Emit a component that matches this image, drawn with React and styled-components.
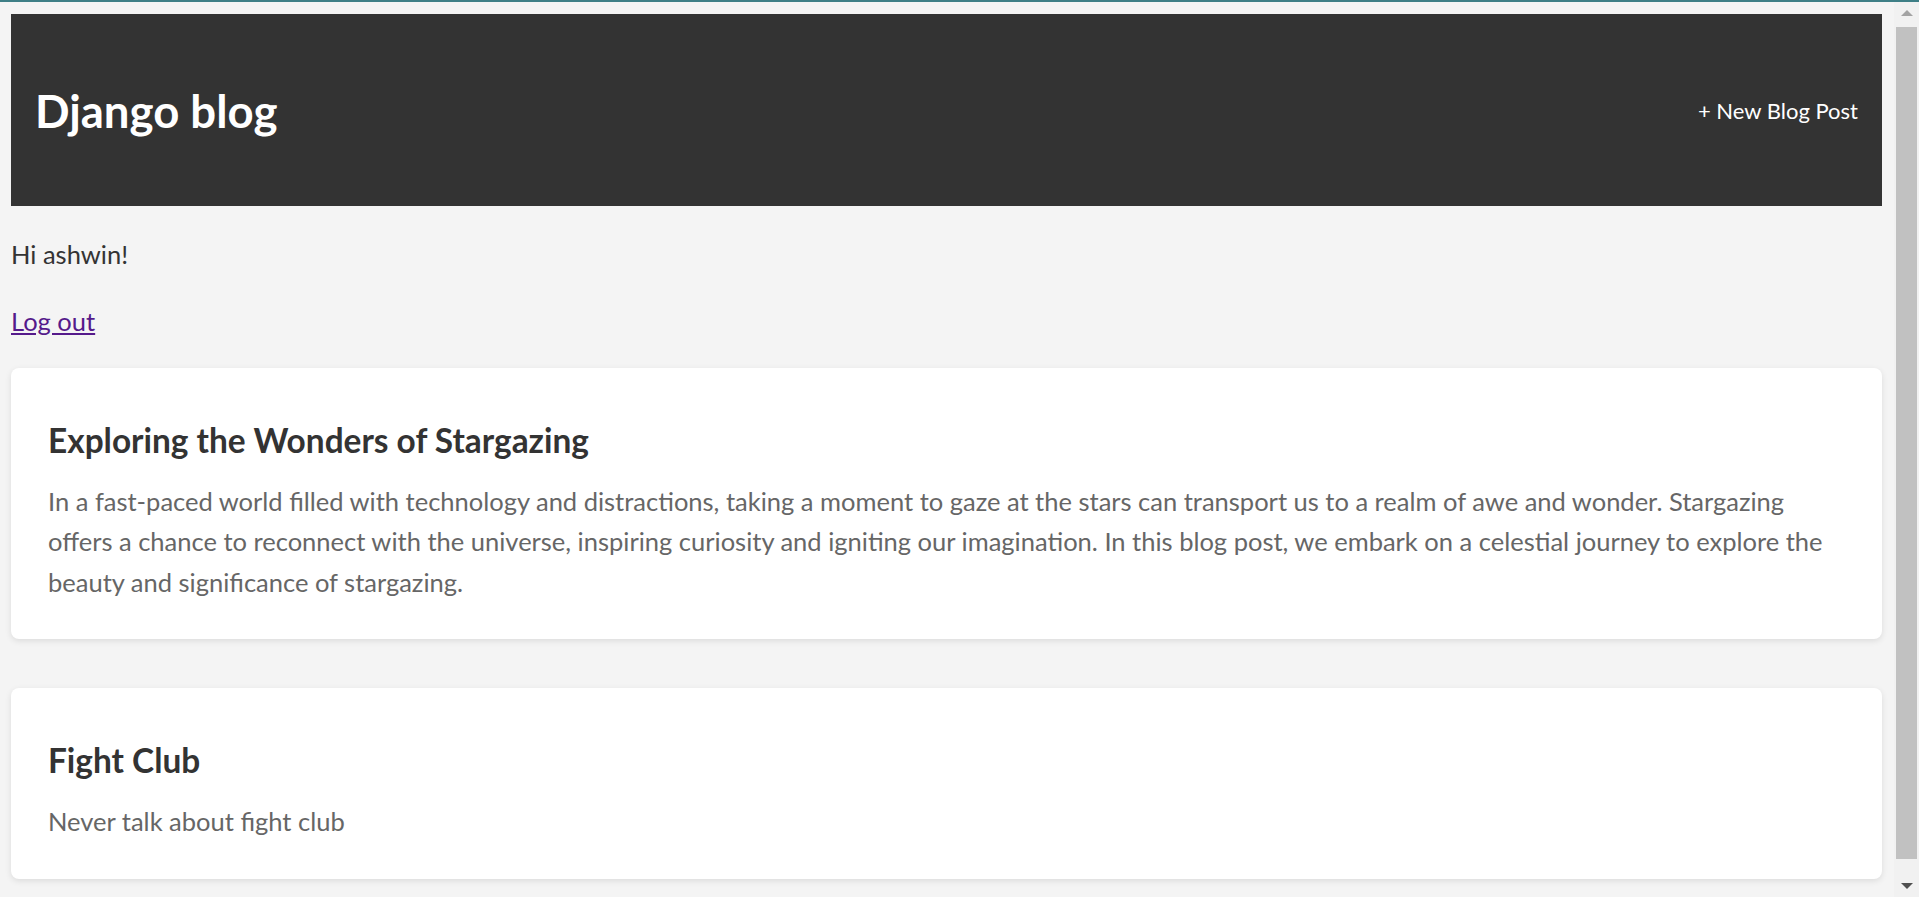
import styled, { createGlobalStyle } from 'styled-components';

const GlobalStyle = createGlobalStyle`
  html, body {
    margin: 0;
    padding: 0;
    height: 100%;
    overflow: hidden;
    background: #f4f4f4;
  }
  #root {
    height: 100%;
  }
`;

const Frame = styled.div`
  height: 100%;
  display: flex;
  flex-direction: column;
  font-family: Lato, "Liberation Sans", sans-serif;
`;
const TopStrip = styled.div`
  flex: 0 0 2px;
  background: #3e7f86;
`;
const Viewport = styled.div`
  flex: 1;
  display: flex;
  min-height: 0;
`;
const Page = styled.main`
  flex: 1;
  min-width: 0;
  overflow: hidden;
  padding: 12px 12px 0 11px;
`;
const Rail = styled.div`
  flex: 0 0 25px;
  display: flex;
  flex-direction: column;
  background: #f1f1f1;
`;
const RailButton = styled.div`
  flex: 0 0 22px;
  display: flex;
  align-items: center;
  justify-content: center;

  &::before {
    content: '';
    border-left: 6px solid transparent;
    border-right: 6px solid transparent;
    ${(p) =>
      p.$down
        ? 'border-top: 6px solid #505050;'
        : 'border-bottom: 6px solid #a3a3a3;'}
  }
`;
const Track = styled.div`
  flex: 1;
  padding: 3px 2px 16px 2px;
  display: flex;
`;
const Thumb = styled.div`
  flex: 1;
  background: #c1c1c1;
`;

const Header = styled.header`
  height: 192px;
  background: #333333;
  display: flex;
  align-items: center;
  justify-content: space-between;
  padding: 0 24px 0 24px;
  color: #fff;
`;
const Brand = styled.h1`
  margin: 0;
  font-size: 45.5px;
  font-weight: 700;
`;
const NewPost = styled.a`
  color: #fff;
  text-decoration: none;
  font-size: 22px;
`;
const Line = styled.p`
  margin: ${(p) => (p.$first ? '28px' : '27px')} 0 0;
  font-size: 25.5px;
  line-height: 40px;
  color: #333;
`;
const LogOut = styled.a`
  color: #551a8b;
  text-decoration: underline;
`;
const PostList = styled.div`
  margin-top: 27px;
  display: flex;
  flex-direction: column;
  gap: 49px;
`;
const Card = styled.article`
  background: #fff;
  border-radius: 8px;
  box-shadow: 0 2px 6px rgba(0, 0, 0, 0.1);
  padding: 49px 37px 37px;
`;
const CardTitle = styled.h2`
  margin: 0 0 17px;
  font-size: 33.4px;
  line-height: 47px;
  font-weight: 700;
  color: #333;
`;
const CardText = styled.p`
  margin: 0;
  max-width: 1782px;
  font-size: 25.5px;
  line-height: 40.4px;
  color: #666;
`;

const posts = [
  {
    title: 'Exploring the Wonders of Stargazing',
    body: 'In a fast-paced world filled with technology and distractions, taking a moment to gaze at the stars can transport us to a realm of awe and wonder. Stargazing offers a chance to reconnect with the universe, inspiring curiosity and igniting our imagination. In this blog post, we embark on a celestial journey to explore the beauty and significance of stargazing.',
  },
  { title: 'Fight Club', body: 'Never talk about fight club' },
];

export default function App() {
  return (
    <>
      <GlobalStyle />
      <Frame>
        <TopStrip />
        <Viewport>
          <Page>
            <Header>
              <Brand>Django blog</Brand>
              <NewPost href="#">+ New Blog Post</NewPost>
            </Header>
            <Line $first>Hi ashwin!</Line>
            <Line>
              <LogOut href="#">Log out</LogOut>
            </Line>
            <PostList>
              {posts.map((post) => (
                <Card key={post.title}>
                  <CardTitle>{post.title}</CardTitle>
                  <CardText>{post.body}</CardText>
                </Card>
              ))}
            </PostList>
          </Page>
          <Rail>
            <RailButton />
            <Track>
              <Thumb />
            </Track>
            <RailButton $down />
          </Rail>
        </Viewport>
      </Frame>
    </>
  );
}
